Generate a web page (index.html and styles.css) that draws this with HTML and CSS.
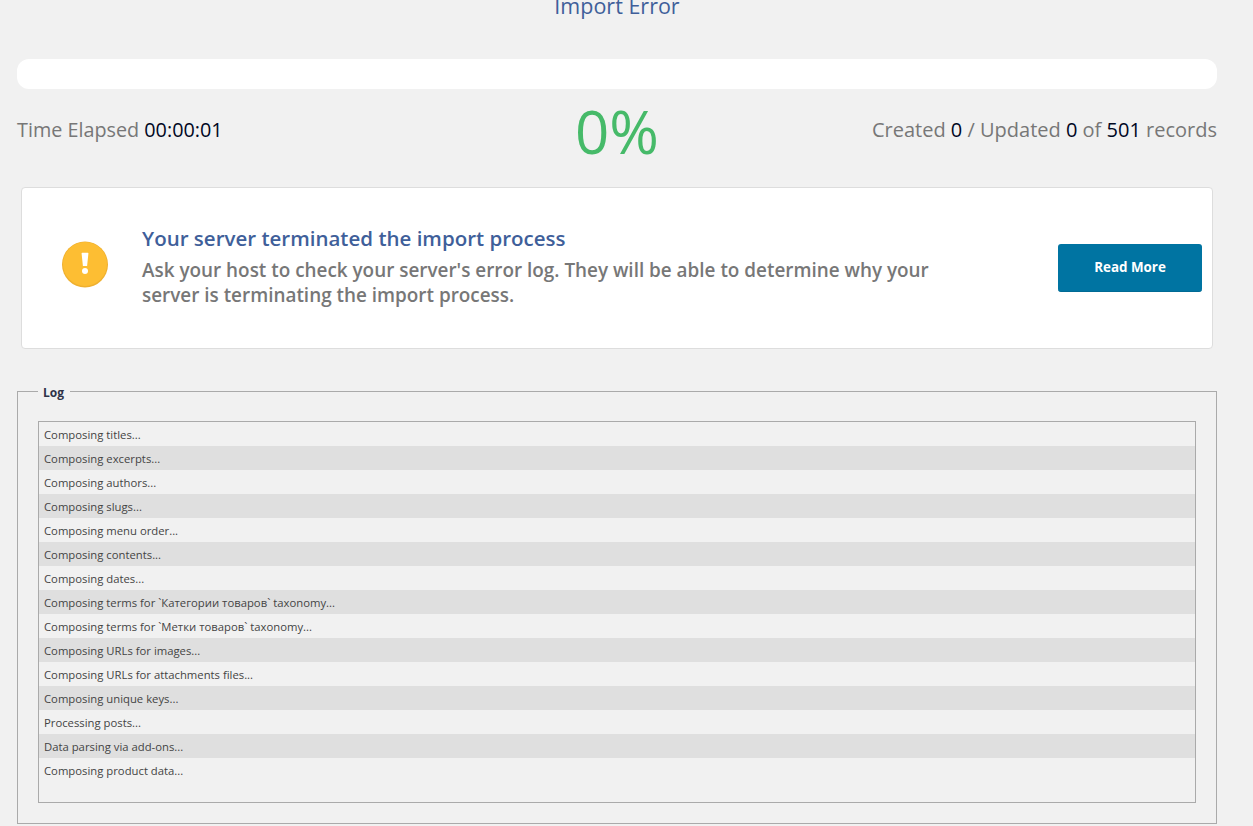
FILE: index.html
```html
<!DOCTYPE html>
<html lang="en">
<head>
<meta charset="utf-8">
<title>Import Error</title>
<link rel="stylesheet" href="styles.css">
</head>
<body>
<div class="page">
  <h2 class="heading">Import Error</h2>
  <div class="progress"></div>
  <div class="stats">
    <div class="stat stat-left">Time Elapsed <b>00:00:01</b></div>
    <div class="percent">0%</div>
    <div class="stat stat-right">Created <b>0</b> / Updated <b>0</b> of <b>501</b> records</div>
  </div>
  <div class="notice">
    <svg class="notice-icon" width="46" height="47" viewBox="0 0 46 47" aria-hidden="true">
      <circle cx="23" cy="23.5" r="23" fill="#efb02f"/>
      <circle cx="23" cy="23" r="22" fill="#fdbe33"/>
      <path d="M20.3 11.7h5.4a.7.7 0 0 1 .7.8l-1.3 12.5h-4.2l-1.3-12.5a.7.7 0 0 1 .7-.8z" fill="#fff"/>
      <circle cx="23" cy="30" r="3" fill="#fff"/>
    </svg>
    <div class="notice-text">
      <h3 class="notice-title">Your server terminated the import process</h3>
      <p class="notice-body">Ask your host to check your server's error log. They will be able to determine why your server is terminating the import process.</p>
    </div>
    <a class="button" href="#">Read More</a>
  </div>
  <fieldset class="log">
    <legend class="log-legend">Log</legend>
    <div class="log-box">
      <div class="log-row">Composing titles...</div>
      <div class="log-row">Composing excerpts...</div>
      <div class="log-row">Composing authors...</div>
      <div class="log-row">Composing slugs...</div>
      <div class="log-row">Composing menu order...</div>
      <div class="log-row">Composing contents...</div>
      <div class="log-row">Composing dates...</div>
      <div class="log-row">Composing terms for `Категории товаров` taxonomy...</div>
      <div class="log-row">Composing terms for `Метки товаров` taxonomy...</div>
      <div class="log-row">Composing URLs for images...</div>
      <div class="log-row">Composing URLs for attachments files...</div>
      <div class="log-row">Composing unique keys...</div>
      <div class="log-row">Processing posts...</div>
      <div class="log-row">Data parsing via add-ons...</div>
      <div class="log-row">Composing product data...</div>
    </div>
  </fieldset>
</div>
</body>
</html>
```
FILE: styles.css
```css
html, body {
  margin: 0;
  padding: 0;
  height: 826px;
  overflow: hidden;
  background: #f1f1f1;
}
body {
  font-family: "Open Sans", "Noto Sans", sans-serif;
}
.page {
  width: 1200px;
  margin-left: 17px;
  display: flex;
  flex-direction: column;
}
.heading {
  margin: -11px 0 0;
  height: 70px;
  font-size: 21.5px;
  line-height: 34px;
  font-weight: 400;
  color: #3f5f9a;
  text-align: center;
}
.progress {
  height: 30px;
  background: #fff;
  border-radius: 12px;
}
.stats {
  height: 98px;
  display: grid;
  grid-template-columns: 1fr auto 1fr;
  grid-template-rows: 82px;
  align-items: center;
  color: #777;
  font-size: 19.8px;
}
.stat {
  padding-bottom: 2px;
}
.stat b {
  font-weight: 400;
  color: #00071f;
}
.stat-right {
  text-align: right;
  font-size: 20px;
}
.percent {
  font-size: 60px;
  line-height: 80px;
  color: #46ba69;
  font-weight: 400;
  margin-top: 2px;
}
.notice {
  height: 162px;
  box-sizing: border-box;
  padding-bottom: 5px;
  margin: 0 4px;
  display: flex;
  align-items: center;
  background: #fff;
  border: 1px solid #ddd;
  border-radius: 4px;
}
.notice-icon {
  margin-left: 40px;
  margin-bottom: 3px;
  flex: none;
}
.notice-text {
  margin-left: 34px;
  width: 810px;
  flex: none;
  padding-top: 1px;
}
.notice-title {
  margin: 0 0 6px;
  font-size: 20.5px;
  line-height: 28px;
  font-weight: 600;
  color: #3f5f9a;
}
.notice-body {
  margin: 0;
  font-size: 18.9px;
  line-height: 25px;
  font-weight: 600;
  color: #777;
}
.button {
  margin-left: auto;
  margin-right: 10px;
  margin-top: 5px;
  width: 144px;
  height: 48px;
  padding-bottom: 2px;
  display: flex;
  align-items: center;
  justify-content: center;
  box-sizing: border-box;
  background: #0074a2;
  border-bottom: 1px solid #006a94;
  border-radius: 3px;
  color: #fff;
  font-size: 13.4px;
  font-weight: 700;
  text-decoration: none;
}
.log {
  margin: 32px 0 0;
  padding: 20px;
  height: 443px;
  box-sizing: border-box;
  border: 1px solid #aaa;
  min-width: 0;
}
.log-legend {
  margin-left: 0;
  padding: 4px 6px 0 5px;
  font-size: 12px;
  line-height: 16px;
  font-weight: 700;
  color: #2e3348;
}
.log-box {
  height: 382px;
  box-sizing: border-box;
  border: 1px solid #aaa;
  font-size: 11.3px;
  color: #444;
}
.log-row {
  height: 24px;
  line-height: 25px;
  padding-left: 5px;
}
.log-row:nth-child(even) {
  background: #dfdfdf;
}
```
